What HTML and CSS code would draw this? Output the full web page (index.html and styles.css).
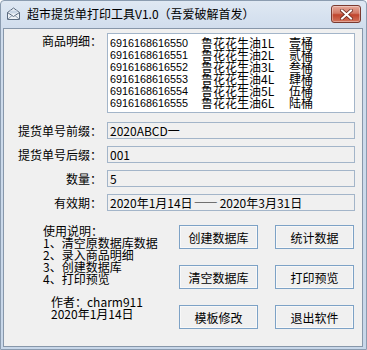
FILE: index.html
```html
<!DOCTYPE html>
<html lang="zh">
<head>
<meta charset="utf-8">
<title>超市提货单打印工具</title>
<link rel="stylesheet" href="styles.css">
</head>
<body>
<div class="window">
  <div class="titlebar">
    <svg class="app-icon" width="15" height="14" viewBox="0 0 15 14">
      <path d="M1.5 5.5 L7.5 1 L13.5 5.5 V12.5 H1.5 Z" fill="#eef2f7" stroke="#5a6b80" stroke-width="1"/>
      <path d="M1.5 5.5 L7.5 9.5 L13.5 5.5" fill="none" stroke="#5a6b80" stroke-width="1"/>
      <path d="M1.5 12.5 L6 8.5 M13.5 12.5 L9 8.5" stroke="#8a99ab" stroke-width="1"/>
      <rect x="4" y="3.5" width="7" height="3" fill="#c9d6e6"/>
    </svg>
    <span class="title">超市提货单打印工具V1.0（吾爱破解首发）</span>
    <div class="close-btn">
      <svg width="13" height="11" viewBox="0 0 13 11">
        <path d="M2 1.5 L11 9.5 M11 1.5 L2 9.5" stroke="#6b2a1e" stroke-width="3.6" stroke-linecap="square"/>
        <path d="M2 1.5 L11 9.5 M11 1.5 L2 9.5" stroke="#ffffff" stroke-width="2" stroke-linecap="square"/>
      </svg>
    </div>
  </div>
  <div class="client">
    <div class="form">
      <label class="lbl lbl-top">商品明细：</label>
      <div class="textbox">
        <div class="line"><span class="code">6916168616550</span><span>鲁花花生油1L</span><span>壹桶</span></div>
        <div class="line"><span class="code">6916168616551</span><span>鲁花花生油2L</span><span>贰桶</span></div>
        <div class="line"><span class="code">6916168616552</span><span>鲁花花生油3L</span><span>叁桶</span></div>
        <div class="line"><span class="code">6916168616553</span><span>鲁花花生油4L</span><span>肆桶</span></div>
        <div class="line"><span class="code">6916168616554</span><span>鲁花花生油5L</span><span>伍桶</span></div>
        <div class="line"><span class="code">6916168616555</span><span>鲁花花生油6L</span><span>陆桶</span></div>
      </div>
      <label class="lbl">提货单号前缀：</label>
      <div class="field">2020ABCD一</div>
      <label class="lbl">提货单号后缀：</label>
      <div class="field">001</div>
      <label class="lbl">数量：</label>
      <div class="field">5</div>
      <label class="lbl">有效期：</label>
      <div class="field">2020年1月14日<span class="dash">——</span>2020年3月31日</div>
    </div>
    <div class="bottom">
      <div class="notes">
        <div class="usage">
          <div>使用说明：</div>
          <div>1、清空原数据库数据</div>
          <div>2、录入商品明细</div>
          <div>3、创建数据库</div>
          <div>4、打印预览</div>
        </div>
        <div class="author">
          <div>作者：charm911</div>
          <div>2020年1月14日</div>
        </div>
      </div>
      <div class="buttons">
        <div class="btn">创建数据库</div>
        <div class="btn">统计数据</div>
        <div class="btn">清空数据库</div>
        <div class="btn">打印预览</div>
        <div class="btn">模板修改</div>
        <div class="btn">退出软件</div>
      </div>
    </div>
  </div>
</div>
</body>
</html>
```

FILE: styles.css
```css
* { box-sizing: border-box; }
html, body { margin: 0; padding: 0; }
body {
  width: 367px;
  height: 350px;
  overflow: hidden;
  font-family: "Noto Sans CJK SC", "Liberation Sans", sans-serif;
  font-size: 12px;
  color: #000;
}
.window {
  width: 367px;
  height: 350px;
  display: flex;
  flex-direction: column;
  background: linear-gradient(#dfe8f3, #cfdcec 30px, #c8d7e9);
  border: 1px solid #8b9cb0;
  border-radius: 4px 4px 0 0;
}
.titlebar {
  height: 27px;
  flex: none;
  display: flex;
  align-items: center;
  padding-left: 5px;
  position: relative;
}
.app-icon { flex: none; margin-right: 6px; margin-top: -2px; }
.title {
  font-size: 12px;
  line-height: 14px;
  color: #000;
  margin-top: -2px;
}
.close-btn {
  position: absolute;
  right: 5px;
  top: 4px;
  width: 30px;
  height: 18px;
  border: 1px solid #7a3a30;
  border-radius: 3px;
  background: linear-gradient(#e6a99b, #d27a66 45%, #c0442c 55%, #d2745c);
  display: flex;
  align-items: center;
  justify-content: center;
  box-shadow: inset 0 0 0 1px rgba(255,255,255,0.35);
}
.client {
  flex: 1;
  margin: 0 3px 2px 2px;
  background: #f0f0f0;
  border: 1px solid #8797aa;
  display: flex;
  flex-direction: column;
}
.form {
  display: grid;
  grid-template-columns: 98px 248px;
  column-gap: 5px;
  row-gap: 7px;
  padding-top: 4px;
  align-items: center;
}
.lbl {
  text-align: right;
  line-height: 14px;
  white-space: nowrap;
}
.lbl-top { align-self: start; padding-top: 1px; }
.textbox {
  height: 80px;
  background: #fff;
  border: 1px solid #a3b5c9;
  padding: 3px 0 0 2px;
  margin-bottom: 2px;
}
.line {
  display: grid;
  grid-template-columns: 91px 88px auto;
  height: 12px;
  line-height: 12px;
  white-space: nowrap;
}
.code {
  font-family: "Liberation Sans", sans-serif;
  font-size: 10.8px;
}
.field {
  height: 17px;
  border: 1px solid #a3b5c9;
  background: #f0f0f0;
  padding-left: 2px;
  line-height: 15px;
  white-space: nowrap;
}
.dash {
  letter-spacing: 2px;
  padding-left: 1px;
  font-weight: 300;
}
.bottom {
  display: flex;
  margin-top: 14px;
}
.notes {
  width: 175px;
  flex: none;
  padding-left: 39px;
  line-height: 12px;
}
.author {
  margin-top: 11px;
  padding-left: 8px;
}
.buttons {
  display: grid;
  grid-template-columns: 79px 79px;
  grid-auto-rows: 24px;
  column-gap: 17px;
  row-gap: 16px;
}
.btn {
  border: 1px solid #7da2c6;
  background: #f0f0f0;
  box-shadow: inset 0 0 0 1px #f8f8f8;
  display: flex;
  align-items: center;
  justify-content: center;
  font-size: 12px;
}
```
